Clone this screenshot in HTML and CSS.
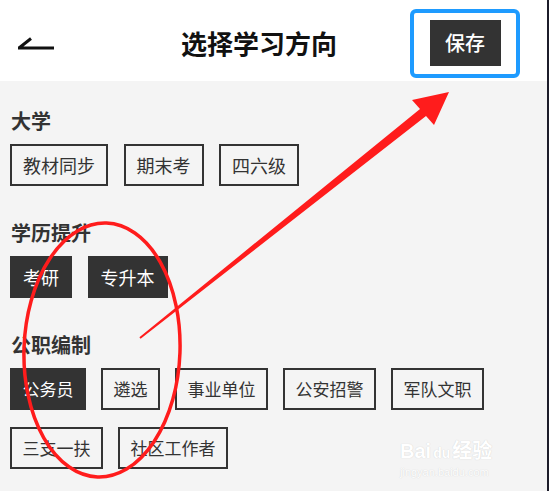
FILE: index.html
```html
<!DOCTYPE html>
<html lang="zh-CN">
<head>
    <meta charset="UTF-8">
    <title>选择学习方向</title>
    <link rel="stylesheet" href="styles.css">
</head>
<body>

<div class="screen">
    <div class="header">
        <div class="back">
            <svg width="40" height="14" viewBox="0 0 40 14">
                <path d="M2 12 H38 M3 12 L15 2.5" stroke="#111" stroke-width="3" fill="none"/>
            </svg>
        </div>
        <div class="title">选择学习方向</div>
        <div class="save-box">
            <div class="save">保存</div>
        </div>
    </div>

    <div class="main">
        <div class="section">
            <div class="heading">大学</div>
            <div class="tags big">
                <span class="tag">教材同步</span>
                <span class="tag">期末考</span>
                <span class="tag">四六级</span>
            </div>
        </div>

        <div class="section">
            <div class="heading">学历提升</div>
            <div class="tags big">
                <span class="tag on">考研</span>
                <span class="tag on">专升本</span>
            </div>
        </div>

        <div class="section">
            <div class="heading">公职编制</div>
            <div class="tags">
                <span class="tag on">公务员</span>
                <span class="tag">遴选</span>
                <span class="tag">事业单位</span>
                <span class="tag">公安招警</span>
                <span class="tag">军队文职</span>
                <span class="tag">三支一扶</span>
                <span class="tag">社区工作者</span>
            </div>
        </div>
    </div>

    <div class="watermark">
        <div class="wm-big">Bai<span class="wm-du">du</span>经验</div>
        <div class="wm-small">jingyan.baidu.com</div>
    </div>

    <!-- red annotation drawn over the screenshot -->
    <svg class="marks" width="549" height="491" viewBox="0 0 549 491">
        <ellipse cx="102" cy="350" rx="78" ry="127" transform="rotate(2 102 350)"
                 fill="none" stroke="#ff1c1c" stroke-width="3.5"/>
        <polygon points="139.4,337.2 420,109 412,100 449,92 434,125 426,116 140.6,338.8"
                 fill="#ff1c1c"/>
    </svg>
</div>

</body>
</html>
```

FILE: styles.css
```css
body {
    margin: 0;
    font-family: "Noto Sans CJK SC", "Noto Sans", sans-serif;
    color: #333;
}
.screen {
    position: relative;
    width: 547px;
    height: 491px;
    border-right: 2px solid #1c1c2a;
    background-color: #f4f4f4;
    overflow: hidden;
}
.header {
    display: flex;
    align-items: center;
    height: 76px;
    padding-top: 5px;
    background: #fff;
}
.back {
    display: flex;
    margin-left: 16px;
}
.title {
    margin-left: 125px;
    font-size: 26px;
    font-weight: bold;
    color: #111;
    line-height: 30px;
}
.save-box {
    display: flex;
    align-items: center;
    justify-content: center;
    width: 102px;
    height: 61px;
    margin-left: auto;
    margin-right: 27px;
    border: 4px solid #1e9bff;
    border-radius: 6px;
    background: #fff;
}
.save {
    width: 71px;
    height: 46px;
    line-height: 46px;
    text-align: center;
    font-size: 20px;
    font-weight: 500;
    color: #fff;
    background: #333;
}
.main {
    padding: 28px 10px 0;
}
.section {
    margin-bottom: 35px;
}
.heading {
    font-size: 20px;
    line-height: 24px;
    font-weight: bold;
    color: #333;
    margin: 0 0 11px 1px;
}
.tags {
    display: flex;
    flex-wrap: wrap;
    gap: 17px 15px;
}
.tag {
    height: 38px;
    line-height: 38px;
    padding: 0 10.5px;
    font-size: 17px;
    border: 2px solid #333;
    color: #333;
}
.tags.big {
    gap: 17px 15.5px;
}
.tags.big .tag {
    padding: 0 11px;
    font-size: 18px;
}
.tag.on {
    background: #333;
    color: #fff;
}
.watermark {
    position: absolute;
    left: 400px;
    top: 438px;
    color: #fff;
    text-shadow: 0 0 1px #c8c8c8;
}
.wm-big {
    font-family: "Liberation Sans", "Noto Sans CJK SC", sans-serif;
    font-size: 20px;
    line-height: 26px;
    font-weight: bold;
}
.wm-du {
    font-size: 14px;
    margin: 0 2px;
}
.wm-small {
    font-family: "Liberation Sans", sans-serif;
    font-size: 11px;
    line-height: 12px;
}
.marks {
    position: absolute;
    left: 0;
    top: 0;
    pointer-events: none;
}
```
